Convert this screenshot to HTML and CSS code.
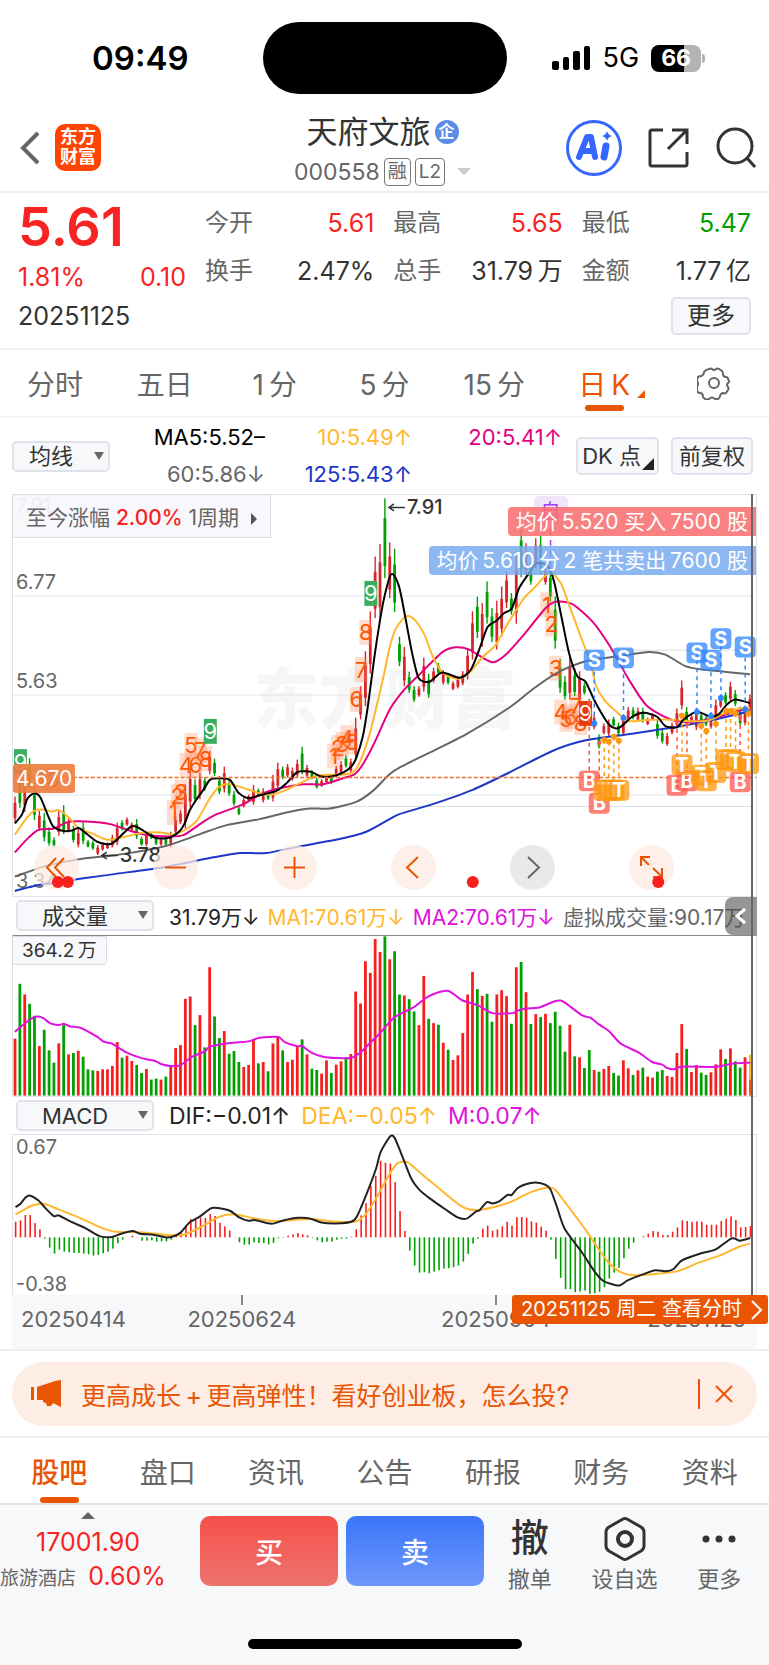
FILE: index.html
```html
<!DOCTYPE html>
<html lang="zh-CN">
<head>
    <meta charset="UTF-8">
    <meta name="viewport" content="width=device-width, initial-scale=1.0">
    <title>天府文旅 000558</title>
    <link rel="stylesheet" href="styles.css">
</head>
<body>
    <div class="status-bar">
        <div class="time">09:49</div>
        <div class="island"></div>
        <div class="status-icons">
            <svg width="39" height="24" viewBox="0 0 39 24" aria-hidden="true">
                <rect x="0" y="15" width="7" height="9" rx="2"/>
                <rect x="11" y="11" width="6" height="13" rx="2"/>
                <rect x="21" y="5" width="7" height="19" rx="2"/>
                <rect x="32" y="0" width="6" height="24" rx="2"/>
            </svg>
            <span class="network">5G</span>
            <span class="battery">66</span>
        </div>
    </div>

    <header class="header">
        <div class="header-left">
            <button class="icon-btn" aria-label="返回">
                <svg width="21" height="34" viewBox="0 0 21 34"><path d="M18 2 3 17l15 15" fill="none" stroke="#666" stroke-width="4"/></svg>
            </button>
            <a class="logo" href="#">东方<br>财富</a>
        </div>
        <div class="stock">
            <h1 class="stock-name">天府文旅 <span class="corp">企</span></h1>
            <div class="stock-code">000558 <span class="mark">融</span><span class="mark">L2</span><i class="caret"></i></div>
        </div>
        <div class="header-right">
            <button class="icon-btn" aria-label="AI">
                <svg width="58" height="58" viewBox="0 0 58 58">
                    <circle cx="29" cy="29" r="26.500" fill="none" stroke="#3566ff" stroke-width="3"/>
                    <path d="M14 38 22 18h4l4 20M17 32h11" fill="none" stroke="#3566ff" stroke-width="6" stroke-linejoin="round" stroke-linecap="round"/>
                    <path d="M41 27 39 38" stroke="#3566ff" stroke-width="7" stroke-linecap="round"/>
                    <path d="M42 12q1 4 5 5-4 1-5 5-1-4-5-5 4-1 5-5z" fill="#3566ff"/>
                </svg>
            </button>
            <button class="icon-btn" aria-label="分享">
                <svg width="42" height="42" viewBox="0 0 42 42" fill="none" stroke="#333" stroke-width="3">
                    <path d="M15 3H4q-2 0-2 2v32q0 2 2 2h33q2 0 2-2V25M24 3h15v14M39 3 20 22"/>
                </svg>
            </button>
            <button class="icon-btn" aria-label="搜索">
                <svg width="42" height="42" viewBox="0 0 42 42" fill="none" stroke="#333" stroke-width="3">
                    <circle cx="20" cy="19" r="17"/><path d="m32 31 8 9"/>
                </svg>
            </button>
        </div>
    </header>

    <section class="quote">
        <div class="price-box">
            <div class="price">5.61</div>
            <div class="change"><span>1.81%</span><span>0.10</span></div>
        </div>
        <dl class="quote-grid">
            <div><dt>今开</dt><dd class="up">5.61</dd></div>
            <div><dt>最高</dt><dd class="up">5.65</dd></div>
            <div><dt>最低</dt><dd class="down">5.47</dd></div>
            <div><dt>换手</dt><dd>2.47%</dd></div>
            <div><dt>总手</dt><dd>31.79&thinsp;万</dd></div>
            <div><dt>金额</dt><dd>1.77&thinsp;亿</dd></div>
        </dl>
        <div class="date">20251125</div>
        <button class="box-btn more">更多</button>
    </section>

    <nav class="period">
        <a href="#">分时</a>
        <a href="#">五日</a>
        <a href="#">1&thinsp;分</a>
        <a href="#">5&thinsp;分</a>
        <a href="#">15&thinsp;分</a>
        <a href="#" class="active">日&thinsp;K<i class="corner"></i></a>
        <a href="#" aria-label="设置">
            <svg width="34" height="34" viewBox="0 0 34 34" fill="none" stroke="#666" stroke-width="2" stroke-linejoin="round">
                <path d="M12 3q2-1 3 0 2 2 4 0 1-1 3 0l3 2q1 1 1 3 0 3 3 3 2 0 2 2l1 2q0 2-1 2-2 2 0 4 1 1 0 3l-2 3q-1 1-3 0-2 0-3 3 0 2-2 3h-3q-3-3-6 0-2 1-4 0l-2-2q0-4-3-4-2 0-3-2v-4q2-3 0-6 0-2 1-4 1-1 3-1 3-1 3-4 1-2 5-3z"/>
                <circle cx="17" cy="17" r="5"/>
            </svg>
        </a>
    </nav>

    <main class="charts">
        <div class="ma-row">
            <span class="picker ma-picker"><select aria-label="主图指标"><option>均线</option></select></span>
            <div class="ma-legend">
                <span class="c-black">MA5:5.52–</span><span class="c-yellow">10:5.49↑</span><span class="c-magenta">20:5.41↑</span>
                <span class="c-gray">60:5.86↓</span><span class="c-blue">125:5.43↑</span>
            </div>
            <button class="box-btn dk">DK 点</button>
            <button class="box-btn">前复权</button>
        </div>

        <div class="k-chart">
            <svg id="kline" class="plot" viewBox="0 0 745 402" role="img" aria-label="日K线"></svg>
            <button class="gain">至今涨幅 <b>2.00%</b> 1周期 <i></i></button>
            <div class="trades">
                <span class="tag buy-tag">均价&thinsp;5.520 买入&thinsp;7500 股</span>
                <span class="tag sell-tag">均价&thinsp;5.610&thinsp;分&thinsp;2 笔共卖出&thinsp;7600 股</span>
            </div>
            <span class="cost">4.670</span>
            <div class="controls">
                <button aria-label="最左"><svg width="45" height="45" viewBox="0 0 45 45"><path d="M22 13 13 22.500 22 32M30 13 21 22.500 30 32"/></svg></button>
                <button aria-label="缩小"><svg width="45" height="45" viewBox="0 0 45 45"><path d="M12 22.500h21"/></svg></button>
                <button aria-label="放大"><svg width="45" height="45" viewBox="0 0 45 45"><path d="M12 22.500h21M22.500 12v21"/></svg></button>
                <button aria-label="左移"><svg width="45" height="45" viewBox="0 0 45 45"><path d="m27 12-11 10.500L27 33"/></svg></button>
                <button aria-label="右移" class="dim"><svg width="45" height="45" viewBox="0 0 45 45"><path d="m18 12 11 10.500L18 33"/></svg></button>
                <button aria-label="全屏"><svg width="45" height="45" viewBox="0 0 45 45"><path d="M12 21v-9h9M12 12l8 8M33 23v9h-9M33 32l-9-9"/></svg></button>
            </div>
            <svg id="dots" class="plot overlay" viewBox="0 0 745 402" aria-hidden="true"></svg>
        </div>

        <div class="indicator-row">
            <span class="picker"><select aria-label="副图一"><option>成交量</option></select></span>
            <span class="c-dark">31.79万↓</span>
            <span class="c-yellow">MA1:70.61万↓</span>
            <span class="c-purple">MA2:70.61万↓</span>
            <span class="c-gray">虚拟成交量:90.17万</span>
            <button class="drawer" aria-label="展开"><svg width="32" height="38" viewBox="0 0 32 38"><path d="m20 12-8 7 8 7" fill="none" stroke="#fff" stroke-width="3"/></svg></button>
        </div>
        <div class="vol-chart">
            <svg id="volume" class="plot" viewBox="0 0 745 161" role="img" aria-label="成交量"></svg>
            <span class="vol-max">364.2&thinsp;万</span>
        </div>

        <div class="indicator-row macd-row">
            <span class="picker"><select aria-label="副图二"><option>MACD</option></select></span>
            <span class="c-dark">DIF:−0.01↑</span>
            <span class="c-yellow">DEA:−0.05↑</span>
            <span class="c-purple">M:0.07↑</span>
        </div>
        <div class="macd-chart">
            <svg id="macd" class="plot" viewBox="0 0 745 160" role="img" aria-label="MACD"></svg>
        </div>

        <div class="axis">
            <span>20250414</span><span class="tick">20250624</span><span class="tick">20250904</span><span class="last">20251125</span>
            <a class="day-link" href="#">20251125 周二 查看分时
                <svg width="14" height="22" viewBox="0 0 14 22"><path d="m2 2 9 9-9 9" fill="none" stroke="#fff" stroke-width="2"/></svg>
            </a>
        </div>
        <div class="crosshair"></div>
    </main>

    <div class="banner-wrap">
        <div class="banner">
            <svg width="32" height="28" viewBox="0 0 32 28" fill="#ea5504"><path d="M0 7h3v13H0zM6 7 24 1 30 0v27l-6-3-2-1-2 3h-4l-1-3-3-1v-2H6z"/></svg>
            <a href="#">更高成长&thinsp;+&thinsp;更高弹性！看好创业板，怎么投?</a>
            <button class="icon-btn close" aria-label="关闭"><svg width="18" height="18" viewBox="0 0 18 18"><path d="m1 1 16 16M17 1 1 17" stroke="#ea5504" stroke-width="2"/></svg></button>
        </div>
    </div>

    <nav class="info-tabs">
        <a href="#" class="active">股吧</a>
        <a href="#">盘口</a>
        <a href="#">资讯</a>
        <a href="#">公告</a>
        <a href="#">研报</a>
        <a href="#">财务</a>
        <a href="#">资料</a>
    </nav>

    <footer class="footer">
        <div class="trade-bar">
            <a class="sector" href="#">
                <i></i>
                <span class="sector-value">17001.90</span>
                <span class="sector-name">旅游酒店 <b>0.60%</b></span>
            </a>
            <button class="trade buy">买</button>
            <button class="trade sell">卖</button>
            <button class="action"><span class="big">撤</span>撤单</button>
            <button class="action">
                <svg width="44" height="46" viewBox="0 0 44 46" fill="none" stroke="#333"><path d="M20 3q2-1 4 0l14 8q3 2 3 5v14q0 3-3 5l-14 8q-2 1-4 0L6 35q-3-2-3-5V16q0-3 3-5z" stroke-width="3"/><circle cx="22" cy="23" r="7" stroke-width="4"/></svg>
                设自选
            </button>
            <button class="action">
                <svg width="34" height="46" viewBox="0 0 34 46" fill="#333"><circle cx="4" cy="23" r="3.500"/><circle cx="17" cy="23" r="3.500"/><circle cx="30" cy="23" r="3.500"/></svg>
                更多
            </button>
        </div>
        <div class="home-bar"></div>
    </footer>

    <script src="charts.js"></script>
</body>
</html>
```
FILE: styles.css
```css
* {
    box-sizing: border-box;
}
body {
    margin: 0;
    font-family: Inter, "Noto Sans CJK SC", sans-serif;
    font-size: 22px;
    color: #333;
    background-color: #fff;
}
a {
    color: inherit;
    text-decoration: none;
}
button {
    font-family: inherit;
    color: inherit;
    border: none;
    padding: 0;
    background: none;
    cursor: pointer;
}
svg {
    display: block;
}
.icon-btn {
    display: block;
}
.up {
    color: #f82323;
}
.down {
    color: #009f00;
}
.c-black { color: #000; }
.c-dark { color: #222; }
.c-gray { color: #666; }
.c-yellow { color: #ffb72d; }
.c-magenta { color: #e4007f; }
.c-purple { color: #e012e0; }
.c-blue { color: #1d37c8; }

/* status bar */
.status-bar {
    display: grid;
    grid-template-columns: 1fr 244px 1fr;
    align-items: center;
    height: 104px;
    padding-top: 12px;
}
.time {
    padding-left: 18px;
    text-align: center;
    font-size: 33px;
    font-weight: 600;
    color: #000;
}
.island {
    height: 72px;
    border-radius: 36px;
    background-color: #000;
}
.status-icons {
    display: flex;
    align-items: center;
    gap: 12px;
    padding-left: 45px;
    color: #000;
}
.network {
    font-size: 27px;
    line-height: 28px;
}
.battery {
    position: relative;
    width: 50px;
    height: 27px;
    border-radius: 8px;
    background: linear-gradient(to right, #000 66%, #b3b3b3 66%);
    color: #fff;
    font-size: 23px;
    font-weight: 700;
    line-height: 27px;
    text-align: center;
}
.battery::after {
    content: "";
    position: absolute;
    right: -4px;
    top: 9px;
    width: 3px;
    height: 9px;
    border-radius: 0 3px 3px 0;
    background-color: #b3b3b3;
}

/* header */
.header {
    display: grid;
    grid-template-columns: 1fr auto 1fr;
    align-items: center;
    height: 89px;
    padding: 0 12px;
    border-bottom: 2px solid #eee;
}
.header-left,
.header-right {
    display: flex;
    align-items: center;
}
.header-left {
    gap: 14px;
    padding-left: 8px;
}
.header-right {
    justify-content: flex-end;
    gap: 25px;
}
.logo {
    width: 46px;
    height: 47px;
    padding-top: 3px;
    border-radius: 10px;
    background-color: #ff4400;
    color: #fff;
    font-size: 18px;
    font-weight: 700;
    line-height: 20px;
    text-align: center;
}
.stock {
    padding: 6px 4px 0 0;
    text-align: center;
}
.stock-name {
    display: flex;
    align-items: center;
    justify-content: center;
    gap: 4px;
    margin: 0;
    font-size: 31px;
    font-weight: 400;
    line-height: 42px;
}
.corp {
    width: 24px;
    height: 24px;
    border-radius: 12px;
    background-color: #5b8ce8;
    color: #fff;
    font-size: 16px;
    font-weight: 700;
    line-height: 23px;
}
.stock-code {
    display: flex;
    align-items: center;
    justify-content: center;
    gap: 4px;
    font-size: 23px;
    line-height: 38px;
    color: #666;
}
.mark {
    height: 28px;
    padding: 0 3px;
    border: 1px solid #777;
    border-radius: 4px;
    font-size: 19px;
    line-height: 26px;
}
.caret {
    margin-left: 8px;
    border: 7px solid transparent;
    border-top-color: #ccc;
    border-bottom: none;
}

/* quote */
.quote {
    display: grid;
    grid-template-columns: 168px 1fr;
    column-gap: 19px;
    padding: 4px 18px 13px;
    border-bottom: 2px solid #f3f3f4;
}
.price {
    font-size: 54px;
    font-weight: 600;
    line-height: 60px;
    color: #f82323;
}
.change {
    display: flex;
    justify-content: space-between;
    font-size: 25px;
    line-height: 40px;
    color: #f82323;
}
.quote-grid {
    display: grid;
    grid-template-columns: repeat(3, 1fr);
    column-gap: 19px;
    grid-auto-rows: 48px;
    margin: 0;
    padding-top: 2px;
    font-size: 25px;
    line-height: 48px;
}
.quote-grid div {
    display: flex;
    justify-content: space-between;
}
.quote-grid dt {
    color: #666;
    font-size: 24px;
}
.quote-grid dd {
    margin: 0;
}
.date {
    font-size: 25px;
    line-height: 38px;
}
.box-btn {
    height: 38px;
    padding: 0 6px;
    border: 2px solid #dfe2ea;
    border-radius: 5px;
    background-color: #f7f8fa;
    font-size: 22px;
    line-height: 34px;
    white-space: nowrap;
}
.more {
    justify-self: end;
    width: 80px;
    font-size: 24px;
}

/* tabs */
.period,
.info-tabs {
    display: flex;
    font-size: 28px;
    color: #666;
}
.period {
    height: 68px;
    border-bottom: 2px solid #f5f5f6;
}
.period a,
.info-tabs a {
    flex: 1;
    display: flex;
    align-items: center;
    justify-content: center;
    position: relative;
    white-space: pre;
}
.period .active,
.info-tabs .active {
    color: #ea5504;
}
.period .active::after,
.info-tabs .active::after {
    content: "";
    position: absolute;
    bottom: 5px;
    left: calc(50% - 19px);
    width: 39px;
    height: 6px;
    border-radius: 3px;
    background-color: #ea5504;
}
.corner {
    position: absolute;
    right: 14px;
    bottom: 18px;
    border: 4px solid #ea5504;
    border-top-color: transparent;
    border-left-color: transparent;
}

/* charts */
.charts {
    position: relative;
    padding: 0 12px;
}
.ma-row {
    display: flex;
    align-items: center;
    gap: 12px;
    height: 76px;
    padding-right: 4px;
}
.picker {
    position: relative;
    width: 138px;
    flex: none;
}
.picker select {
    appearance: none;
    width: 100%;
    height: 31px;
    padding: 0 20px 0 0;
    border: 2px solid #dfe2ea;
    border-radius: 5px;
    background-color: #f7f8fa;
    color: #333;
    font-family: inherit;
    font-size: 22px;
    line-height: 26px;
    text-align: center;
    text-align-last: center;
}
.picker::after {
    content: "";
    position: absolute;
    right: 6px;
    top: 11px;
    border: 5px solid transparent;
    border-top: 8px solid #666;
    border-bottom: none;
}
.ma-picker {
    width: 98px;
}
.ma-legend {
    flex: 1;
    display: grid;
    grid-template-columns: 143px 147px 1fr;
    justify-items: end;
    margin-right: 2px;
    font-size: 22px;
    line-height: 37px;
}
.dk {
    position: relative;
    padding: 0 16px 0 4px;
}
.dk::after {
    content: "";
    position: absolute;
    right: 3px;
    bottom: 3px;
    border: 6px solid #222;
    border-top-color: transparent;
    border-left-color: transparent;
}
.k-chart,
.vol-chart,
.macd-chart {
    position: relative;
    border: 1px solid #dfe1e6;
    border-width: 1px 1px 0 1px;
}
.vol-chart {
    border-top-color: #888;
}
.plot {
    width: 100%;
    height: auto;
    overflow: visible;
}
.overlay {
    position: absolute;
    left: 0;
    top: 0;
    pointer-events: none;
}
.plot text {
    font-size: 20px;
}
.plot .label {
    fill: #666;
}
.plot .watermark {
    font-size: 66px;
    font-weight: 900;
    fill: #f6f6f7;
}
.plot .counter {
    font-size: 22px;
}
.plot .badge {
    font-weight: 700;
    fill: #fff;
}
.plot .extreme {
    font-weight: 500;
    fill: #333;
}
.gain {
    position: absolute;
    left: -1px;
    top: -1px;
    height: 44px;
    padding: 0 13px;
    border: 1px solid #d9dce6;
    background-color: rgba(247, 248, 252, 0.93);
    color: #666;
    font-size: 21px;
}
.gain b {
    color: #f82323;
    font-weight: 500;
}
.gain i {
    display: inline-block;
    margin-left: 6px;
    border: 6px solid transparent;
    border-left-color: #555;
    border-right: none;
}
.trades {
    position: absolute;
    right: 0;
    top: 12px;
    display: flex;
    flex-direction: column;
    align-items: flex-end;
    gap: 10px;
}
.tag {
    height: 29px;
    padding: 0 8px;
    border-radius: 4px 0 0 4px;
    color: #fff;
    font-size: 21px;
    line-height: 29px;
}
.buy-tag {
    background-color: rgba(248, 112, 112, 0.88);
}
.sell-tag {
    background-color: rgba(116, 168, 238, 0.82);
}
.cost {
    position: absolute;
    left: 0;
    top: 67%;
    height: 29px;
    padding: 0 3px;
    border-radius: 3px;
    background-color: rgba(239, 125, 64, 0.92);
    color: #fff;
    font-size: 21px;
    line-height: 29px;
}
.controls {
    position: absolute;
    left: 21px;
    right: 82px;
    bottom: 6px;
    display: flex;
    justify-content: space-between;
}
.controls button {
    border-radius: 50%;
    background-color: rgba(253, 235, 225, 0.75);
}
.controls path {
    fill: none;
    stroke: #ea5504;
    stroke-width: 2;
}
.controls .dim {
    background-color: #e9e9e9;
}
.controls .dim path {
    stroke: #666;
}
.indicator-row {
    position: relative;
    display: flex;
    align-items: center;
    gap: 8px;
    height: 39px;
    padding-left: 4px;
    border-top: 1px solid #e2e4e8;
    font-size: 21px;
    white-space: nowrap;
}
.indicator-row .picker + span {
    margin-left: 7px;
}
.macd-row {
    gap: 11px;
    height: 38px;
    font-size: 23px;
}
.macd-row .picker + span {
    margin-left: 4px;
}
.drawer {
    position: absolute;
    right: 0;
    top: 0;
    border-radius: 8px 0 0 8px;
    background-color: rgba(80, 80, 80, 0.6);
}
.vol-max {
    position: absolute;
    left: -1px;
    top: 0;
    padding: 0 9px;
    border: 1px solid #d9dce6;
    border-radius: 0 0 4px 0;
    background-color: #f7f8fa;
    font-size: 19px;
    line-height: 27px;
}
.axis {
    position: relative;
    display: grid;
    grid-template-columns: 23fr 15fr 20fr 15fr 27fr;
    height: 54px;
    background-color: #f7f8fa;
    color: #666;
    font-size: 22px;
    line-height: 48px;
    padding-left: 9px;
    padding-right: 11px;
}
.tick {
    text-align: center;
    background: linear-gradient(#888, #888) top center / 2px 10px no-repeat;
}
.tick + .tick {
    grid-column: 4;
}
.last {
    text-align: right;
}
.day-link {
    position: absolute;
    right: -11px;
    top: 0;
    display: flex;
    align-items: center;
    gap: 8px;
    height: 29px;
    padding: 0 4px 0 9px;
    border-radius: 3px;
    background-color: #ea5504;
    color: #fff;
    font-size: 20px;
    line-height: 29px;
    white-space: nowrap;
}
.crosshair {
    position: absolute;
    right: 16px;
    top: 76px;
    bottom: 54px;
    width: 2px;
    background-color: #666;
}

/* banner */
.banner-wrap {
    padding: 11px 12px 10px;
    border-top: 2px solid #eee;
    border-bottom: 2px solid #eee;
}
.banner {
    display: flex;
    align-items: center;
    gap: 18px;
    height: 64px;
    padding: 0 24px 0 19px;
    border-radius: 32px;
    background-color: #fdede4;
    color: #ea5504;
    font-size: 25px;
}
.banner a {
    flex: 1;
    white-space: nowrap;
}
.close {
    padding: 6px 0 6px 15px;
    border-left: 2px solid #ea5504;
}
.info-tabs {
    height: 65px;
    padding: 0 5px;
}
.info-tabs .active {
    font-weight: 500;
}
.info-tabs .active::after {
    bottom: 0;
}

/* footer */
.footer {
    padding-bottom: 18px;
    border-top: 2px solid #e2e3e6;
    background-color: #f7f8fa;
}
.trade-bar {
    display: flex;
    height: 134px;
    padding: 11px 12px 0 0;
    gap: 8px;
    align-items: flex-start;
}
.sector {
    display: flex;
    flex-direction: column;
    align-items: center;
    width: 192px;
    margin-top: -4px;
    padding-right: 16px;
    color: #f82323;
}
.sector i {
    margin-bottom: 6px;
    border: 7px solid transparent;
    border-bottom-color: #666;
    border-top: none;
}
.sector-value {
    font-size: 25px;
    line-height: 34px;
}
.sector-name {
    align-self: flex-start;
    color: #666;
    font-size: 19px;
    line-height: 34px;
    white-space: nowrap;
}
.sector b {
    margin-left: 7px;
    color: #f82323;
    font-size: 25px;
    font-weight: 400;
}
.trade {
    width: 138px;
    height: 70px;
    border-radius: 10px;
    color: #fff;
    font-size: 28px;
    font-weight: 500;
}
.buy {
    background: linear-gradient(#f5504a, #ed736e);
}
.sell {
    background: linear-gradient(#3a76fa, #7097fc);
}
.action {
    flex: 1 0 auto;
    display: flex;
    flex-direction: column;
    align-items: center;
    color: #666;
    font-size: 22px;
    line-height: 34px;
}
.action svg,
.big {
    height: 46px;
}
.big {
    color: #333;
    font-size: 38px;
    font-weight: 500;
    line-height: 42px;
}
.home-bar {
    width: 274px;
    height: 10px;
    margin: 0 auto;
    border-radius: 5px;
    background-color: #000;
}
```
FILE: charts.js
```js
const RED = '#d7262b';
const GREEN = '#00a000';
const NS = 'http://www.w3.org/2000/svg';
const STEP = 4.88;

// volume per day, negative = falling day
const volume = [171,-336,304,-276,-240,149,-198,-136,-99,157,-213,124,-128,135,-117,-79,-76,74,79,79,
89,161,-114,120,104,-92,-68,80,-48,-51,48,-57,88,143,152,291,298,-212,242,-145,
386,-238,-173,194,-126,-134,-101,86,92,169,-97,101,-73,157,178,-136,101,108,147,-169,
124,-81,-77,66,106,-68,93,103,-110,125,313,277,404,369,471,432,-479,410,-434,-304,
301,-290,-253,212,360,-231,218,-213,159,-138,107,121,188,304,372,-320,300,-306,-222,304,
317,299,-216,386,-402,311,-215,245,-236,246,-218,-252,-210,-132,213,-118,115,-83,-137,77,
-72,80,89,-68,-60,106,82,-62,76,-84,57,54,-72,-77,59,56,128,215,-140,71,
92,-69,-62,70,94,139,-110,142,-103,-84,115];

const macd = [47,51,67,67,43,24,-4,-31,-49,-37,-43,-45,-47,-47,-49,-51,-55,-53,-48,-43,
-34,-18,-7,0,5,1,-10,-10,-9,-13,-12,-12,-7,6,14,35,55,52,60,58,
70,64,44,33,20,1,-15,-22,-22,-15,-17,-17,-21,-17,-3,1,5,9,13,9,
6,-2,-9,-15,-13,-13,-7,-4,-4,2,24,66,103,155,185,230,224,222,166,79,
19,-40,-85,-106,-105,-108,-103,-99,-94,-93,-90,-85,-73,-50,-19,-4,26,35,20,24,
33,47,35,61,61,59,48,44,32,20,-7,-65,-122,-156,-156,-165,-163,-160,-170,-168,
-164,-150,-124,-106,-92,-63,-34,-16,0,3,11,19,17,7,7,17,30,51,49,46,
48,47,38,38,38,49,56,63,52,30,31,34];

// high and low of every candle, in chart units
const candles = [[922,998],[858,956],[838,968],[807,905],[890,992],[965,1025],[972,1057],[1015,1070],[1045,1075],[965,1040],
[948,1035],[985,1030],[1010,1060],[1018,1075],[1000,1065],[1053,1075],[1055,1082],[1068,1098],[1060,1085],[1060,1080],
[1037,1075],[1000,1068],[993,1025],[985,1010],[1000,1025],[990,1050],[1043,1070],[1030,1072],[1030,1050],[1040,1068],
[1045,1070],[1040,1070],[1028,1077],[980,1035],[962,1005],[885,1018],[840,955],[870,940],[850,930],[865,905],
[785,855],[808,860],[860,915],[832,910],[870,920],[905,950],[952,978],[925,955],[917,935],[887,947],
[898,920],[897,940],[905,932],[857,937],[820,902],[832,870],[824,865],[835,875],[811,865],[772,855],
[827,865],[842,870],[865,898],[870,893],[855,882],[855,885],[830,865],[815,860],[798,835],[808,850],
[685,815],[590,690],[485,650],[365,552],[200,385],[162,385],[25,265],[158,325],[177,367],[441,530],
[472,590],[547,610],[590,637],[590,622],[504,607],[553,625],[535,580],[520,555],[542,585],[550,585],
[575,602],[562,597],[545,587],[475,570],[365,510],[321,445],[340,472],[275,402],[355,457],[333,480],
[290,440],[245,355],[310,375],[185,402],[115,262],[160,255],[215,285],[145,235],[137,255],[230,285],
[240,335],[320,477],[508,610],[560,630],[497,630],[537,620],[545,640],[580,615],[628,655],[675,720],
[735,778],[702,735],[690,740],[682,712],[700,737],[680,740],[653,695],[653,690],[655,697],[655,700],
[685,707],[672,692],[690,748],[720,762],[730,770],[700,735],[657,715],[573,660],[653,710],[675,707],
[655,722],[670,702],[678,710],[675,718],[630,700],[622,655],[608,645],[577,637],[602,650],[652,710],
[652,708],[615,668]];

const lines = {
    ma5: '43,1003 65,975 80,930 101,912 120,925 145,985 160,1014 190,1026 215,1024 235,1017 260,1035 290,1058 315,1065 335,1064 360,1042 390,1014 407,1012 430,1025 465,1046 490,1048 511,1045 540,1025 555,1000 570,962 590,930 610,902 630,872 655,867 690,872 715,910 745,927 780,918 830,905 860,882 890,850 910,846 935,848 965,862 995,862 1030,850 1055,832 1070,806 1090,740 1105,650 1125,500 1141,395 1155,320 1172,258 1183,256 1200,295 1218,385 1238,490 1258,566 1290,577 1328,549 1382,565 1415,540 1440,480 1465,412 1492,393 1515,370 1538,356 1560,295 1585,257 1612,221 1645,227 1665,275 1685,370 1710,490 1735,560 1760,577 1790,640 1830,705 1860,716 1900,682 1935,670 1975,682 2000,710 2035,714 2055,690 2095,667 2135,682 2160,675 2185,645 2210,630 2255,641',
    ma10: '43,1037 80,985 101,965 125,961 155,967 175,963 205,985 235,1017 275,1033 320,1052 370,1044 430,1031 480,1030 520,1036 550,1025 590,995 625,935 655,895 685,884 720,893 780,912 820,915 860,902 905,880 950,860 1000,856 1055,852 1080,820 1110,735 1150,570 1170,475 1190,415 1220,380 1245,390 1275,435 1300,500 1330,550 1375,568 1410,550 1450,503 1490,465 1530,395 1575,325 1610,290 1652,248 1685,280 1710,345 1745,440 1775,520 1790,585 1815,630 1850,665 1890,695 1940,692 2000,690 2060,695 2120,695 2150,685 2200,660 2255,655',
    ma20: '43,1090 85,1045 115,1022 160,1018 205,998 260,997 330,1005 390,1025 440,1038 500,1042 550,1038 600,1005 640,980 730,945 790,912 850,895 910,885 970,885 1030,867 1065,855 1090,825 1125,760 1170,662 1215,600 1265,550 1330,487 1370,473 1410,480 1478,518 1520,495 1570,440 1640,355 1670,336 1720,343 1780,395 1830,465 1890,570 1945,650 2020,692 2080,697 2140,688 2200,670 2255,655',
    ma60: '43,1163 140,1130 240,1110 330,1100 400,1090 500,1070 600,1035 680,1008 780,990 860,970 930,958 990,958 1070,938 1120,905 1170,855 1200,835 1280,795 1400,735 1530,655 1600,600 1670,552 1760,515 1870,498 1950,487 2000,495 2060,530 2110,540 2255,554',
    ma125: '43,1206 130,1185 330,1157 500,1133 640,1105 720,1092 800,1092 900,1072 1020,1050 1100,1028 1170,990 1200,975 1300,945 1420,902 1540,845 1660,785 1760,753 1900,733 2050,710 2150,690 2255,665',
    vol: '43,427 72,403 100,384 115,381 130,387 150,402 175,407 190,403 210,411 240,415 290,442 310,457 335,463 380,490 430,508 465,515 485,525 510,530 540,528 575,503 615,486 630,472 690,461 745,456 780,445 835,443 855,458 890,470 907,470 935,490 970,502 1010,506 1055,505 1085,487 1110,462 1140,433 1170,398 1190,380 1245,352 1280,325 1315,309 1345,304 1365,315 1390,333 1435,347 1480,371 1540,371 1555,364 1580,357 1620,354 1665,336 1685,333 1700,341 1750,378 1775,385 1800,405 1830,425 1865,462 1920,490 1960,518 1990,526 2005,536 2025,540 2050,532 2140,533 2170,530 2200,523 2255,520',
    dif: '45,337 60,327 75,308 88,302 115,318 135,340 160,364 175,362 210,380 255,400 280,415 300,425 335,427 360,418 397,409 420,417 460,420 500,428 525,423 545,410 570,382 600,365 630,342 645,339 690,348 715,366 745,378 765,376 815,387 850,377 895,369 930,371 965,383 1010,386 1055,381 1072,365 1100,300 1130,220 1143,172 1172,124 1185,128 1205,175 1235,250 1258,283 1290,310 1340,345 1375,368 1395,373 1407,369 1430,350 1440,347 1463,322 1480,326 1500,320 1525,300 1537,301 1555,280 1580,268 1610,263 1640,270 1655,285 1675,340 1697,402 1750,475 1790,535 1815,560 1860,573 1885,558 1930,540 1970,527 2000,530 2025,523 2050,497 2110,475 2150,465 2195,433 2210,432 2225,438 2255,430',
    dea: '45,359 70,345 95,332 130,327 170,342 240,370 300,398 340,410 430,413 500,421 550,420 600,398 650,370 680,360 710,359 760,370 830,379 930,373 1000,380 1065,381 1095,362 1130,310 1160,255 1185,215 1200,202 1225,202 1270,240 1330,290 1380,330 1410,344 1450,344 1500,333 1545,317 1595,292 1650,278 1670,286 1700,325 1760,405 1790,450 1830,505 1870,535 1910,542 2030,531 2100,504 2170,480 2220,457 2255,446'
};

// sequence counters: x, y, digit, kind
const counters = [[520,970,1],[532,922,2],[543,908,3],[558,828,4],[573,768,5],[587,828,6],[601,782,7],[617,808,8],[631,726,9,'g'],
[60,817,9,'g'],[1002,800,1],[1014,775,2],[1027,765,3],[1042,745,4],[1056,758,5],[1070,630,6],[1085,540,7],[1099,428,8],[1114,311,9,'g'],
[1643,345,1],[1657,403,2],[1670,536,3],[1685,668,4],[1701,690,5],[1715,682,6],[1730,650,7],[1745,700,8],[1760,672,9,'r']];

// trades: x, y of the badge, y of the price
const trades = {
    S: { color: '#2f86ff', list: [[1786,512,702],[1874,505,686],[2095,490,668],[2137,512,680],[2167,447,626],[2240,472,660]] },
    B: { color: '#ff5548', list: [[1771,875,640],[1801,942,760],[2035,888,695],[2065,875,705],[2225,878,683]] },
    T: { color: '#ff970c', list: [[1816,903,752],[1830,903,757],[1845,903,742],[1860,903,754],[2050,826,679],[2108,858,709],[2123,875,725],[2152,850,703],[2182,811,665],[2196,811,665],[2211,817,672],[2250,823,672]] }
};

function add(svg, name, attrs, text) {
    const el = document.createElementNS(NS, name);
    for (const key in attrs) el.setAttribute(key, attrs[key]);
    if (text !== undefined) el.textContent = text;
    svg.appendChild(el);
    return el;
}

const px = x => x / 3 - 12.5;
const py = y => y / 3 - 5;

function curve(svg, points, color, top) {
    const p = points.split(' ').map(s => s.split(',').map(Number)).map(([x, y]) => [px(x), (y - top) / 3]);
    let d = 'M' + p[0];
    for (let i = 1; i < p.length; i++) {
        const a = p[i - 2] || p[i - 1], b = p[i - 1], c = p[i], e = p[i + 1] || c;
        d += `C${b[0] + (c[0] - a[0]) / 8},${b[1] + (c[1] - a[1]) / 8} ${c[0] - (e[0] - b[0]) / 8},${c[1] - (e[1] - b[1]) / 8} ${c}`;
    }
    add(svg, 'path', { d, fill: 'none', stroke: color, 'stroke-width': 2, 'stroke-linejoin': 'round' });
}

function drawKline() {
    const svg = document.getElementById('kline');
    add(svg, 'text', { x: 241, y: 229, class: 'watermark' }, '东方财富');
    for (const y of [319, 617, 917]) add(svg, 'path', { d: `M0 ${py(y)}H743`, stroke: '#e2e6ee' });
    add(svg, 'path', { d: `M220 ${py(952)}H743M550 ${py(482)}H743`, stroke: '#dcdfe4' });
    [['7.91', 18], ['6.77', 94], ['5.63', 194], ['4.48', 293], ['3.34', 394]].forEach(([t, y]) =>
        add(svg, 'text', { x: 3, y, class: 'label' }, t));

    candles.forEach(([hi, lo], i) => {
        const x = 2 + STEP * i, h = lo - hi;
        const fill = volume[i] < 0 ? GREEN : RED;
        add(svg, 'rect', { x: x - 0.7, y: py(hi), width: 1.4, height: h / 3, fill });
        add(svg, 'rect', { x: x - 1.4, y: py(hi + h * 0.25), width: 2.8, height: h * 0.2, fill });
    });

    counters.forEach(([x, y, n, kind]) => {
        const fill = kind === 'g' ? '#3aae5e' : kind === 'r' ? '#e63c0a' : 'rgba(255,140,90,0.3)';
        add(svg, 'rect', { x: px(x) - 6.5, y: py(y) - 12.5, width: 13, height: 25, fill });
        add(svg, 'text', { x: px(x), y: py(y) + 8, 'text-anchor': 'middle', class: 'counter', fill: kind ? '#fff' : '#ff5500' }, n);
    });

    curve(svg, lines.ma60, '#666', 15);
    curve(svg, lines.ma125, '#1d37c8', 15);
    curve(svg, lines.ma20, '#e4007f', 15);
    curve(svg, lines.ma10, '#ffb72d', 15);
    curve(svg, lines.ma5, '#000', 15);
    add(svg, 'path', { d: `M0 ${py(865)}H745`, stroke: '#f07030', 'stroke-width': 1.5, 'stroke-dasharray': '4 2' });

    add(svg, 'rect', { x: 522, y: 1, width: 35, height: 30, rx: 6, fill: '#f0e6fc' });
    add(svg, 'text', { x: 529, y: 24, fill: '#a040f0' }, '自');
    add(svg, 'path', { d: 'M539 34V78', stroke: '#a040f0', 'stroke-width': 1.5, 'stroke-dasharray': '6 5' });

    for (const type of ['B', 'T', 'S']) {
        const { color, list } = trades[type];
        for (const [x, y, price] of list) {
            add(svg, 'path', { d: `M${px(x)} ${py(price)}V${py(y)}`, stroke: color, 'stroke-width': 1.5, 'stroke-dasharray': '4 4' });
            add(svg, 'circle', { cx: px(x), cy: py(price), r: type === 'B' ? 2 : 3, fill: color });
        }
        for (const [x, y] of list) {
            add(svg, 'rect', { x: px(x) - 10.5, y: py(y) - 10.5, width: 21, height: 21, rx: 4, fill: color, opacity: 0.75 });
            add(svg, 'text', { x: px(x), y: py(y) + 7, 'text-anchor': 'middle', class: 'badge' }, type);
        }
    }

    add(svg, 'path', { d: 'M377 12.500h16M382 9l-5 3.500 5 3.500', fill: 'none', stroke: '#333', 'stroke-width': 1.5 });
    add(svg, 'text', { x: 395, y: 19, class: 'extreme' }, '7.91');
    add(svg, 'path', { d: 'M89 361.500h16M94 358l-5 3.500 5 3.500', fill: 'none', stroke: '#333', 'stroke-width': 1.5 });
    add(svg, 'text', { x: 107, y: 368, class: 'extreme' }, '3.78');

    const dots = document.getElementById('dots');
    for (const cx of [45, 55, 461, 647]) add(dots, 'circle', { cx, cy: 388, r: 6, fill: '#fa1e1e' });
}

function drawVolume() {
    const svg = document.getElementById('volume');
    volume.forEach((v, i) => {
        const h = Math.abs(v) / 3;
        add(svg, 'rect', { x: 0.6 + STEP * i, y: 160 - h, width: 2.8, height: h, fill: v < 0 ? GREEN : '#f91e1e' });
    });
    add(svg, 'rect', { x: 738, y: 119, width: 3, height: 41, fill: '#ffb72d' });
    add(svg, 'rect', { x: 738, y: 144, width: 3, height: 16, fill: '#f05a14' });
    curve(svg, lines.vol, '#e012e0', 139);
}

function drawMacd() {
    const svg = document.getElementById('macd');
    macd.forEach((v, i) => {
        const h = Math.abs(v) / 3;
        add(svg, 'rect', { x: 1.8 + STEP * i, y: v < 0 ? 102.6 : 102.6 - h, width: 1.6, height: h, fill: v < 0 ? GREEN : '#f91e1e' });
    });
    add(svg, 'text', { x: 3, y: 19, class: 'label' }, '0.67');
    add(svg, 'text', { x: 3, y: 156, class: 'label' }, '-0.38');
    curve(svg, lines.dea, '#ffb72d', 120);
    curve(svg, lines.dif, '#222', 120);
}

drawKline();
drawVolume();
drawMacd();
```
